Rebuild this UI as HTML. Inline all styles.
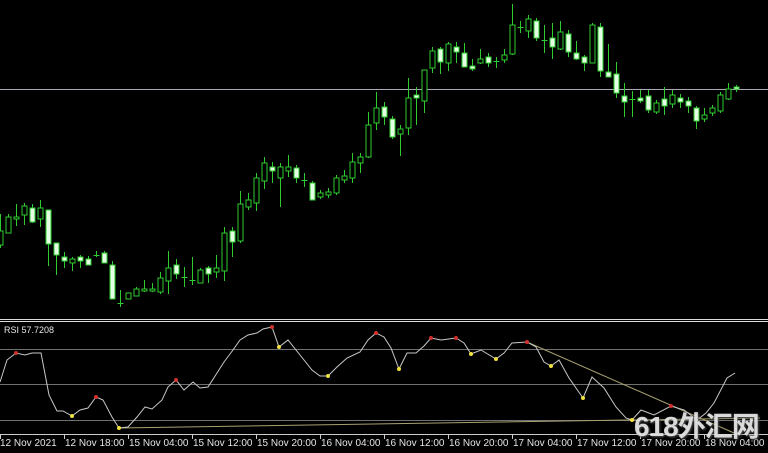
<!DOCTYPE html>
<html><head><meta charset="utf-8"><style>
html,body{margin:0;padding:0;background:#000;width:768px;height:453px;overflow:hidden}
svg{position:absolute;left:0;top:0}
.t{font-family:"Liberation Sans",sans-serif;font-size:10px;fill:#e6e6e6}
.wm{position:absolute;left:634px;top:405px;font-family:"Liberation Sans","Noto Sans CJK SC",sans-serif;font-weight:bold;font-size:28px;color:rgba(235,235,235,0.9);letter-spacing:-1px;text-shadow:1px 1px 2px #555}
</style></head><body>
<svg id="s" width="768" height="453" xmlns="http://www.w3.org/2000/svg">
<line x1="0" y1="89.5" x2="768" y2="89.5" stroke="#a8a8b8" stroke-width="1"/>
<g id="c"></g>
<line x1="0" y1="319.5" x2="768" y2="319.5" stroke="#ddd"/>
<line x1="0" y1="321.5" x2="768" y2="321.5" stroke="#ddd"/>
<text x="4" y="333" class="t" style="font-size:9px">RSI 57.7208</text>
<line x1="0" y1="349.5" x2="768" y2="349.5" stroke="#707070"/>
<line x1="0" y1="384.5" x2="768" y2="384.5" stroke="#707070"/>
<line x1="0" y1="420.5" x2="768" y2="420.5" stroke="#707070"/>
<line x1="119" y1="428" x2="760" y2="418" stroke="#a8a070"/>
<line x1="527" y1="342" x2="734" y2="433" stroke="#a8a070"/>
<g id="r"></g>
<line x1="0" y1="434.5" x2="768" y2="434.5" stroke="#ccc"/>
<g id="ax"></g>
</svg>
<div class="wm">618外汇网</div>
<script>
var C=[[248,231,245,0,214],[217,217,233,0,214],[226,217,219,0,204],[225,206,215,0,203],[223,208,222,1,204],[227,208,219,0,200],[266,210,244,1,210],[275,243,255,1,243],[268,257,261,1,252],[271,259,263,0,257],[268,257,261,1,255],[265,259,265,1,256],[257,255,256,2,251],[263,253,263,1,251],[299,265,299,1,261],[307,303,304,2,290],[299,293,299,0,293],[296,289,296,0,287],[292,289,291,0,280],[292,289,291,0,283],[294,278,292,0,272],[294,268,281,0,251],[279,265,274,1,259],[287,277,278,2,267],[285,280,281,2,257],[283,270,283,0,268],[283,268,274,1,266],[278,268,272,0,255],[281,233,271,0,227],[257,231,242,1,227],[243,204,241,0,191],[210,200,207,0,193],[211,178,203,0,173],[189,163,181,0,157],[183,167,171,1,162],[207,167,178,0,163],[177,167,171,0,155],[183,168,178,1,165],[187,180,181,2,173],[200,183,200,1,181],[199,193,197,0,190],[198,192,195,0,188],[195,178,193,0,175],[183,176,180,0,170],[183,162,178,0,153],[173,157,163,0,153],[158,125,157,0,112],[130,108,123,0,92],[125,107,117,1,102],[139,119,137,1,116],[156,129,134,0,125],[135,98,128,0,78],[125,95,98,1,87],[113,70,101,0,70],[73,51,68,0,47],[74,49,62,1,47],[71,44,63,0,42],[63,47,52,1,42],[67,53,67,1,43],[71,66,69,1,59],[64,59,63,0,49],[67,57,63,1,53],[68,61,62,2,57],[63,55,60,0,49],[55,25,54,0,4],[33,27,28,2,21],[38,19,31,0,15],[41,21,38,1,18],[53,40,41,2,25],[59,38,47,1,23],[50,32,49,0,21],[57,34,52,1,30],[60,53,59,1,41],[71,57,63,1,55],[63,25,63,0,23],[77,27,71,1,23],[77,72,77,1,44],[98,74,93,1,62],[117,96,102,1,83],[117,99,100,2,91],[103,98,101,1,90],[113,96,110,1,90],[114,103,112,0,100],[115,99,106,1,87],[108,95,104,0,90],[108,98,102,1,94],[113,101,106,1,97],[129,108,121,1,106],[122,115,119,0,108],[116,108,113,0,105],[113,95,111,0,92],[100,89,99,0,83],[92,87,89,1,85]];
var h='';
C.forEach(function(c,k){var x=8*k+0.5;var lo=c[0],t=c[1],b=c[2],f=c[3],hi=c[4];
h+='<line x1="'+x+'" y1="'+hi+'" x2="'+x+'" y2="'+lo+'" stroke="#2ecc2e"/>';
if(f==2){h+='<line x1="'+(x-3)+'" y1="'+(t+0.5)+'" x2="'+(x+3)+'" y2="'+(t+0.5)+'" stroke="#2ecc2e"/>';}
else{var hh=Math.max(b-t,2);h+='<rect x="'+(x-2.5)+'" y="'+t+'" width="5" height="'+hh+'" fill="'+(f?'#e4ffe4':'#000')+'" stroke="#2ecc2e" stroke-width="1"/>';}
});
document.getElementById('c').innerHTML=h;
var P=[[0,382],[7,360],[16,353],[25,355],[32,353],[41,353],[49,395],[57,411],[63,411],[72,416],[80,410],[88,408],[96,397],[103,400],[112,417],[119,428],[128,427],[137,417],[145,407],[152,409],[162,400],[168,387],[176,380],[184,390],[193,382],[200,388],[208,387],[217,373],[224,362],[233,350],[240,340],[248,335],[257,333],[263,329],[272,327],[279,347],[288,340],[300,355],[312,370],[320,376],[328,376],[337,367],[347,358],[360,352],[368,340],[376,333],[384,337],[391,348],[399,369],[407,353],[416,353],[424,346],[431,338],[441,340],[456,338],[464,343],[471,354],[481,350],[496,359],[504,353],[512,343],[527,342],[536,347],[544,362],[551,366],[559,360],[569,378],[583,398],[592,377],[604,388],[616,407],[626,418],[632,420],[641,410],[654,415],[671,406],[684,410],[697,420],[706,413],[714,403],[727,378],[735,373]];
var r='<polyline fill="none" stroke="#c8c8c8" stroke-width="1" points="'+P.map(function(p){return p.join(',')}).join(' ')+'"/>';
[[16,353],[96,397],[176,380],[272,327],[376,333],[431,338],[456,338],[527,342],[671,406]].forEach(function(p){r+='<circle cx="'+p[0]+'" cy="'+p[1]+'" r="2" fill="#d03030"/>';});
[[72,416],[119,428],[279,347],[328,376],[399,369],[471,354],[496,359],[551,366],[583,398],[632,420]].forEach(function(p){r+='<circle cx="'+p[0]+'" cy="'+p[1]+'" r="2" fill="#f0e040"/>';});
document.getElementById('r').innerHTML=r;
var L=['12 Nov 2021','12 Nov 18:00','15 Nov 04:00','15 Nov 12:00','15 Nov 20:00','16 Nov 04:00','16 Nov 12:00','16 Nov 20:00','17 Nov 04:00','17 Nov 12:00','17 Nov 20:00','18 Nov 04:00'];
var a='';L.forEach(function(s,i){var x=i*64+0.5;a+='<line x1="'+x+'" y1="434" x2="'+x+'" y2="439" stroke="#ccc"/><text class="t" x="'+(i*64+(i?1:0))+'" y="446">'+s+'</text>';});
document.getElementById('ax').innerHTML=a;
</script>
</body></html>
